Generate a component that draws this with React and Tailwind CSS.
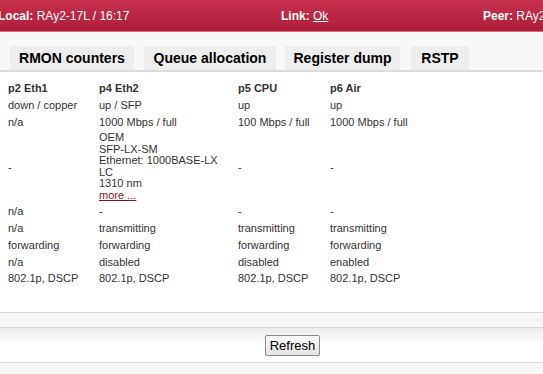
const rows = [
  { cells: ['p2 Eth1', 'p4 Eth2', 'p5 CPU', 'p6 Air'], head: true },
  { cells: ['down / copper', 'up / SFP', 'up', 'up'] },
  { cells: ['n/a', '1000 Mbps / full', '100 Mbps / full', '1000 Mbps / full'] },
  { cells: ['-', 'SFP', '-', '-'], sfp: true },
  { cells: ['n/a', '-', '-', '-'] },
  { cells: ['n/a', 'transmitting', 'transmitting', 'transmitting'] },
  { cells: ['forwarding', 'forwarding', 'forwarding', 'forwarding'] },
  { cells: ['n/a', 'disabled', 'disabled', 'enabled'] },
  { cells: ['802.1p, DSCP', '802.1p, DSCP', '802.1p, DSCP', '802.1p, DSCP'] },
];

const tabs = [
  { label: 'RMON counters', w: 'w-[124px] ml-[10px]' },
  { label: 'Queue allocation', w: 'w-[132px] ml-[10px]' },
  { label: 'Register dump', w: 'w-[115px] ml-[9px]' },
  { label: 'RSTP', w: 'w-[58px] ml-[11px]' },
];

const SfpInfo = () => (
  <div className="flex flex-col leading-[11.5px]">
    <span>OEM</span>
    <span>SFP-LX-SM</span>
    <span>Ethernet: 1000BASE-LX</span>
    <span>LC</span>
    <span>1310 nm</span>
    <a href="#" className="text-[#8a1020] underline">more ...</a>
  </div>
);

export default function App() {
  return (
    <div className="w-[543px] h-[374px] overflow-hidden bg-white font-['Liberation_Sans',Arial,sans-serif]">
      {/* Header bar */}
      <div className="h-[32px] overflow-hidden bg-gradient-to-b from-[#c8304e] to-[#ad1e3b] border-b border-[#d9667c] flex items-center text-white text-[12px] whitespace-nowrap">
        <div className="shrink-0 w-[283px] -ml-[2px]">
          <b>Local:</b> RAy2-17L / 16:17
        </div>
        <div className="shrink-0 w-[202px]">
          <b>Link:</b> <span className="underline">Ok</span>
        </div>
        <div className="shrink-0">
          <b>Peer:</b> RAy2-17R
        </div>
      </div>

      {/* Tabs */}
      <div className="bg-[#f8f8f8] border-b-2 border-[#dcdcdc] pt-[14px] flex">
        {tabs.map((t) => (
          <div
            key={t.label}
            className={`${t.w} shrink-0 h-[24px] bg-[#eeeeee] flex items-center justify-center text-[14px] font-bold text-black`}
          >
            {t.label}
          </div>
        ))}
      </div>

      {/* Port table */}
      <div className="h-[240px] pt-[8px] pl-[8px] text-[11px] text-[#333333]">
        {rows.map((r, i) => (
          <div
            key={i}
            className={`grid grid-cols-[91px_139px_92px_1fr] items-center ${r.sfp ? 'py-[2px]' : 'py-[2px] leading-[12.75px]'} ${r.head ? 'font-bold' : ''}`}
          >
            {r.cells.map((c, j) => (
              <div key={j}>{r.sfp && j === 1 ? <SfpInfo /> : c}</div>
            ))}
          </div>
        ))}
      </div>

      {/* Footer */}
      <div className="border-t border-[#d6d6d6] bg-[#f7f7f7] h-[15px]" />
      <div className="border-t border-[#d6d6d6] h-[35px] bg-gradient-to-b from-[#ececec] via-white to-white flex items-center pl-[265px]">
        <button className="w-[55px] h-[21px] bg-gradient-to-b from-[#fbfbfb] to-[#e3e3e3] border border-[#8a8a8a] rounded-[2px] text-[13px] text-black">
          Refresh
        </button>
      </div>
      <div className="border-t border-[#d6d6d6] bg-[#f7f7f7] h-[20px]" />
    </div>
  );
}
